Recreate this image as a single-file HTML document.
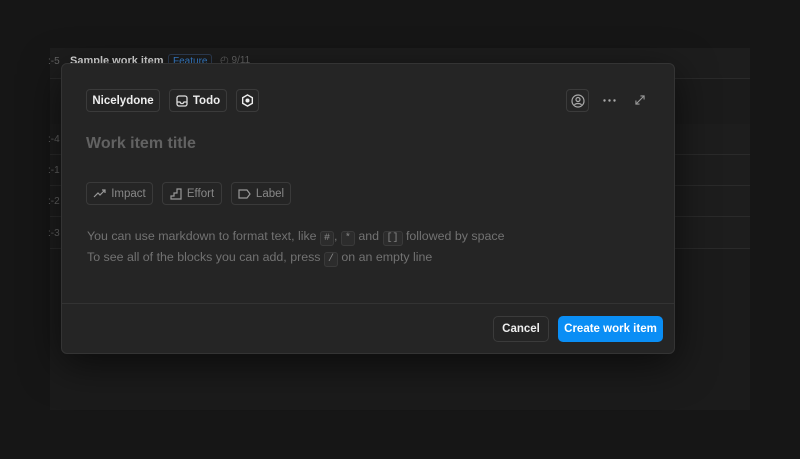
<!DOCTYPE html>
<html><head><style>
*{box-sizing:border-box;margin:0;padding:0}
body{width:800px;height:459px;background:#161616;font-family:"Liberation Sans",sans-serif;position:relative;overflow:hidden}
svg{flex-shrink:0}
.panel{position:absolute;left:50px;top:48px;width:700px;height:362px;background:#1b1b1b}
.row{position:absolute;left:50px;width:700px;border-bottom:1px solid #2a2a2a;background:#1d1d1d}
.lbl{position:absolute;left:48px;color:#666;font-size:10px}
.modal{position:absolute;left:61px;top:63px;width:614px;height:291px;background:#252525;border:1px solid #343434;border-radius:6px;box-shadow:0 10px 40px rgba(0,0,0,.6)}
.chip{position:absolute;height:23px;border:1px solid #3b3b3b;border-radius:4px;color:#eee;font-size:11.5px;font-weight:bold;display:flex;align-items:center;justify-content:center;gap:5px;white-space:nowrap}
.prop{position:absolute;top:118px;height:23px;border:1px solid #3a3a3a;border-radius:4px;color:#888;font-size:11.5px;display:flex;align-items:center;justify-content:center;gap:5px}
.hint{position:absolute;left:25px;color:#727272;font-size:12.4px;white-space:nowrap}
kbd{font-family:"Liberation Mono",monospace;font-size:10px;border:1px solid #3a3a3a;background:#2c2c2c;border-radius:3px;padding:1px 3px;color:#888}
.btn{position:absolute;top:252px;height:26px;border-radius:5px;font-size:11.5px;font-weight:bold;display:flex;align-items:center;justify-content:center}
</style></head><body>
<div class="panel"></div>
<div class="row" style="top:48px;height:31px"></div>
<div style="position:absolute;left:70px;top:55px;color:#ddd;font-size:11px;font-weight:bold">Sample work item</div>
<div style="position:absolute;left:168px;top:54px;color:#3a86d8;font-size:10px;border:1px solid #2e3e55;border-radius:3px;padding:1px 4px">Feature</div>
<div style="position:absolute;left:220px;top:55px;color:#666;font-size:10px">◴ 9/11</div>
<div class="lbl" style="top:56px">:-5</div>
<div class="row" style="top:124px;height:31px"></div><div class="lbl" style="top:134px">:-4</div>
<div class="row" style="top:155px;height:31px"></div><div class="lbl" style="top:165px">:-1</div>
<div class="row" style="top:186px;height:31px"></div><div class="lbl" style="top:196px">:-2</div>
<div class="row" style="top:217px;height:32px"></div><div class="lbl" style="top:228px">:-3</div>
<div class="modal">
 <div class="chip" style="left:24px;top:25px;width:74px">Nicelydone</div>
 <div class="chip" style="left:107px;top:25px;width:58px"><svg width="12" height="12" viewBox="0 0 12 12" fill="none" stroke="#ddd" stroke-width="1.3"><rect x="1" y="1" width="10" height="10" rx="2"/><path d="M1 7h3l1 1.5h2L8 7h3"/></svg>Todo</div>
 <div class="chip" style="left:174px;top:25px;width:23px"><svg width="13" height="13" viewBox="0 0 14 14"><path d="M7 1l5.2 3v6L7 13 1.8 10V4z" fill="none" stroke="#eee" stroke-width="1.5"/><circle cx="7" cy="7" r="2.2" fill="#eee"/></svg></div>
 <div class="chip" style="left:504px;top:25px;width:23px"><svg width="14" height="14" viewBox="0 0 14 14" fill="none" stroke="#aaa" stroke-width="1.2"><circle cx="7" cy="7" r="6"/><circle cx="7" cy="5.5" r="2"/><path d="M3.5 11c1-2 6-2 7 0"/></svg></div>
 <svg style="position:absolute;left:541px;top:35px" width="13" height="3" viewBox="0 0 13 3" fill="#aaa"><circle cx="1.5" cy="1.5" r="1.2"/><circle cx="6.5" cy="1.5" r="1.2"/><circle cx="11.5" cy="1.5" r="1.2"/></svg>
 <svg style="position:absolute;left:573px;top:31px" width="10" height="10" viewBox="0 0 11 11" fill="none" stroke="#999" stroke-width="1.2"><path d="M1 10L10 1M6 1h4v4M1 6v4h4"/></svg>
 <div style="position:absolute;left:24px;top:71px;color:#626262;font-size:16px;font-weight:bold">Work item title</div>
 <div class="prop" style="left:24px;width:67px"><svg width="13" height="10" viewBox="0 0 13 10" fill="none" stroke="#999" stroke-width="1.2"><path d="M1 8l4-4 2 2 5-5M9 1h3v3"/></svg>Impact</div>
 <div class="prop" style="left:100px;width:60px"><svg width="12" height="12" viewBox="0 0 12 12" fill="none" stroke="#999" stroke-width="1.2"><path d="M1 11h10V1H7v4H4v3H1z"/></svg>Effort</div>
 <div class="prop" style="left:169px;width:60px"><svg width="13" height="10" viewBox="0 0 13 10" fill="none" stroke="#999" stroke-width="1.2"><path d="M1 1h8l3 4-3 4H1z"/></svg>Label</div>
 <div class="hint" style="top:165px">You can use markdown to format text, like <kbd>#</kbd>, <kbd>*</kbd> and <kbd>[]</kbd> followed by space</div>
 <div class="hint" style="top:186px">To see all of the blocks you can add, press <kbd>/</kbd> on an empty line</div>
 <div style="position:absolute;left:0;right:0;top:239px;border-top:1px solid #333"></div>
 <div class="btn" style="left:431px;width:56px;border:1px solid #3b3b3b;color:#eee">Cancel</div>
 <div class="btn" style="left:496px;width:105px;background:#0a8ef5;color:#fff">Create work item</div>
</div>
</body></html>
